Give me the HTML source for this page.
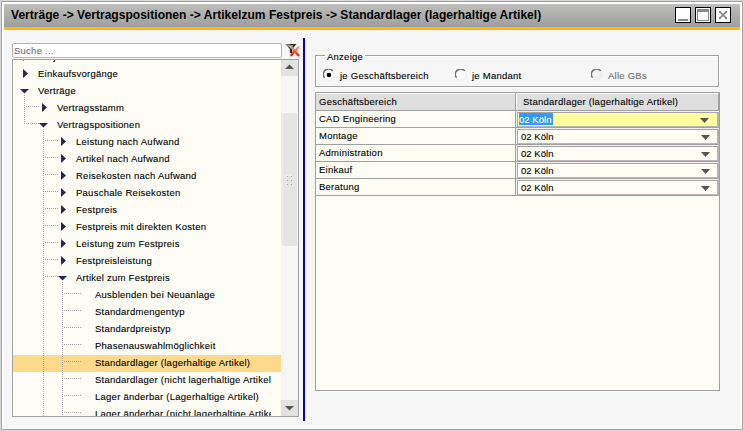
<!DOCTYPE html>
<html><head><meta charset="utf-8"><style>
*{margin:0;padding:0;box-sizing:border-box}
html,body{width:744px;height:431px;overflow:hidden;background:#d7d8d7;font-family:"Liberation Sans",sans-serif;font-size:9.5px;letter-spacing:0.25px;-webkit-text-stroke-width:0.1px;color:#000}
.abs{position:absolute}
.tt{position:absolute;white-space:nowrap;line-height:17px;height:17px;overflow:hidden}
.gt{position:absolute;white-space:nowrap;line-height:15px;height:16px}
.combo{position:absolute;width:203px;height:16px;background:#f2f2f2}
.ci{position:absolute;left:1px;top:1px;width:202px;height:15px;background:#fdfdf4;border-top:1px solid #a4a4a4;border-left:1px solid #acacac;border-bottom:1px solid #b8b8b8;border-right:2px solid #b4b4b4}
.ci.sel{background:#ffff9e}
.ct{position:absolute;left:3px;top:-2px;line-height:17px;white-space:nowrap;letter-spacing:0.05px}
.hl{position:absolute;left:1px;top:0px;height:12px;width:34px;background:#3399ff;color:#fff;line-height:14px;white-space:nowrap;overflow:hidden;text-indent:0px;letter-spacing:0.05px}
</style></head><body>
<div class="abs" style="left:1px;top:1px;width:742px;height:429px;border:1px solid #a69fa6;background:#fff"></div>
<div class="abs" style="left:4px;top:30px;width:736px;height:397px;background:#f6f6f6"></div>
<div class="abs" style="left:4px;top:4px;width:736px;height:23px;background:linear-gradient(#bebfbd,#9e9f9d)"></div>
<div class="abs" style="left:4px;top:27px;width:736px;height:3px;background:#ffb90f"></div>
<div class="abs" style="left:11px;top:4px;line-height:23px;font-size:12px;letter-spacing:0.035px;-webkit-text-stroke-width:0;font-weight:bold;white-space:nowrap">Verträge -&gt; Vertragspositionen -&gt; Artikelzum Festpreis -&gt; Standardlager (lagerhaltige Artikel)</div>
<!-- window buttons -->
<div class="abs" style="left:675px;top:7px;width:16px;height:16px;border:1px solid #000;background:#fff"><div class="abs" style="left:2px;top:11px;width:10px;height:2px;background:#888"></div></div>
<div class="abs" style="left:695px;top:7px;width:16px;height:16px;border:1px solid #000;background:#fff"><div class="abs" style="left:1px;top:1px;width:12px;height:12px;border:1px solid #888;border-top:3px solid #888"></div></div>
<div class="abs" style="left:715px;top:7px;width:16px;height:16px;border:1px solid #000;background:#fff"><svg class="abs" style="left:3px;top:3px" width="9" height="9" fill="#888"><path d="M1,1 L7,7 M7,1 L1,7" stroke="#888" stroke-width="1.7"/><rect x="2.8" y="2.8" width="2.6" height="2.6"/><rect x="0" y="0" width="2" height="2"/><rect x="6" y="0" width="2" height="2"/><rect x="0" y="6" width="2" height="2"/><rect x="6" y="6" width="2" height="2"/></svg></div>

<!-- search -->
<div class="abs" style="left:12px;top:43px;width:270px;height:15px;border:1px solid #b4b4b4;border-radius:2px;background:#fff"></div>
<div class="abs" style="left:14px;top:43px;line-height:15px;color:#707070;white-space:nowrap">Suche ...</div>
<svg class="abs" style="left:284px;top:42px" width="16" height="16">
<defs><linearGradient id="fg" x1="0" y1="0" x2="1" y2="0"><stop offset="0" stop-color="#b0b0b0"/><stop offset="0.55" stop-color="#1a1a1a"/><stop offset="1" stop-color="#333"/></linearGradient>
<linearGradient id="rg" x1="0" y1="0" x2="0" y2="1"><stop offset="0" stop-color="#ff9a80"/><stop offset="1" stop-color="#ff1500"/></linearGradient></defs>
<path d="M1,2 L12.5,2 L8.3,7 L8.3,11.8 L5.8,11 L5.8,7 Z" fill="url(#fg)"/><path d="M3.5,3.2 L9.5,3.2 L7,6 Z" fill="#e8e8e8" opacity="0.8"/>
<path d="M7.2,5.2 L14.3,13.3 M14.3,5.2 L7.2,13.3" stroke="url(#rg)" stroke-width="2.2" stroke-linecap="round"/>
</svg>
<!-- tree box -->
<div class="abs" style="left:12px;top:59px;width:287px;height:358px;border:1px solid #a0a0a0;background:#fdfdf5"></div>
<div class="abs" style="left:13px;top:60px;width:268px;height:356px;overflow:hidden">
<div style="position:absolute;left:0;top:295px;width:268px;height:17px;background:#fdd98b"></div><svg style="position:absolute;left:0;top:0" width="268" height="356" fill="#a0a0a0"><rect x="11" y="35" width="1" height="1"/><rect x="11" y="37" width="1" height="1"/><rect x="11" y="39" width="1" height="1"/><rect x="11" y="41" width="1" height="1"/><rect x="11" y="43" width="1" height="1"/><rect x="11" y="45" width="1" height="1"/><rect x="11" y="47" width="1" height="1"/><rect x="11" y="49" width="1" height="1"/><rect x="11" y="51" width="1" height="1"/><rect x="11" y="53" width="1" height="1"/><rect x="11" y="55" width="1" height="1"/><rect x="11" y="57" width="1" height="1"/><rect x="11" y="59" width="1" height="1"/><rect x="11" y="61" width="1" height="1"/><rect x="11" y="63" width="1" height="1"/><rect x="13" y="46" width="1" height="1"/><rect x="15" y="46" width="1" height="1"/><rect x="17" y="46" width="1" height="1"/><rect x="19" y="46" width="1" height="1"/><rect x="21" y="46" width="1" height="1"/><rect x="23" y="46" width="1" height="1"/><rect x="25" y="46" width="1" height="1"/><rect x="13" y="63" width="1" height="1"/><rect x="15" y="63" width="1" height="1"/><rect x="17" y="63" width="1" height="1"/><rect x="19" y="63" width="1" height="1"/><rect x="21" y="63" width="1" height="1"/><rect x="23" y="63" width="1" height="1"/><rect x="25" y="63" width="1" height="1"/><rect x="30" y="69" width="1" height="1"/><rect x="30" y="71" width="1" height="1"/><rect x="30" y="73" width="1" height="1"/><rect x="30" y="75" width="1" height="1"/><rect x="30" y="77" width="1" height="1"/><rect x="30" y="79" width="1" height="1"/><rect x="30" y="81" width="1" height="1"/><rect x="30" y="83" width="1" height="1"/><rect x="30" y="85" width="1" height="1"/><rect x="30" y="87" width="1" height="1"/><rect x="30" y="89" width="1" height="1"/><rect x="30" y="91" width="1" height="1"/><rect x="30" y="93" width="1" height="1"/><rect x="30" y="95" width="1" height="1"/><rect x="30" y="97" width="1" height="1"/><rect x="30" y="99" width="1" height="1"/><rect x="30" y="101" width="1" height="1"/><rect x="30" y="103" width="1" height="1"/><rect x="30" y="105" width="1" height="1"/><rect x="30" y="107" width="1" height="1"/><rect x="30" y="109" width="1" height="1"/><rect x="30" y="111" width="1" height="1"/><rect x="30" y="113" width="1" height="1"/><rect x="30" y="115" width="1" height="1"/><rect x="30" y="117" width="1" height="1"/><rect x="30" y="119" width="1" height="1"/><rect x="30" y="121" width="1" height="1"/><rect x="30" y="123" width="1" height="1"/><rect x="30" y="125" width="1" height="1"/><rect x="30" y="127" width="1" height="1"/><rect x="30" y="129" width="1" height="1"/><rect x="30" y="131" width="1" height="1"/><rect x="30" y="133" width="1" height="1"/><rect x="30" y="135" width="1" height="1"/><rect x="30" y="137" width="1" height="1"/><rect x="30" y="139" width="1" height="1"/><rect x="30" y="141" width="1" height="1"/><rect x="30" y="143" width="1" height="1"/><rect x="30" y="145" width="1" height="1"/><rect x="30" y="147" width="1" height="1"/><rect x="30" y="149" width="1" height="1"/><rect x="30" y="151" width="1" height="1"/><rect x="30" y="153" width="1" height="1"/><rect x="30" y="155" width="1" height="1"/><rect x="30" y="157" width="1" height="1"/><rect x="30" y="159" width="1" height="1"/><rect x="30" y="161" width="1" height="1"/><rect x="30" y="163" width="1" height="1"/><rect x="30" y="165" width="1" height="1"/><rect x="30" y="167" width="1" height="1"/><rect x="30" y="169" width="1" height="1"/><rect x="30" y="171" width="1" height="1"/><rect x="30" y="173" width="1" height="1"/><rect x="30" y="175" width="1" height="1"/><rect x="30" y="177" width="1" height="1"/><rect x="30" y="179" width="1" height="1"/><rect x="30" y="181" width="1" height="1"/><rect x="30" y="183" width="1" height="1"/><rect x="30" y="185" width="1" height="1"/><rect x="30" y="187" width="1" height="1"/><rect x="30" y="189" width="1" height="1"/><rect x="30" y="191" width="1" height="1"/><rect x="30" y="193" width="1" height="1"/><rect x="30" y="195" width="1" height="1"/><rect x="30" y="197" width="1" height="1"/><rect x="30" y="199" width="1" height="1"/><rect x="30" y="201" width="1" height="1"/><rect x="30" y="203" width="1" height="1"/><rect x="30" y="205" width="1" height="1"/><rect x="30" y="207" width="1" height="1"/><rect x="30" y="209" width="1" height="1"/><rect x="30" y="211" width="1" height="1"/><rect x="30" y="213" width="1" height="1"/><rect x="30" y="215" width="1" height="1"/><rect x="30" y="217" width="1" height="1"/><rect x="30" y="219" width="1" height="1"/><rect x="30" y="221" width="1" height="1"/><rect x="30" y="223" width="1" height="1"/><rect x="30" y="225" width="1" height="1"/><rect x="30" y="227" width="1" height="1"/><rect x="30" y="229" width="1" height="1"/><rect x="30" y="231" width="1" height="1"/><rect x="30" y="233" width="1" height="1"/><rect x="30" y="235" width="1" height="1"/><rect x="30" y="237" width="1" height="1"/><rect x="30" y="239" width="1" height="1"/><rect x="30" y="241" width="1" height="1"/><rect x="30" y="243" width="1" height="1"/><rect x="30" y="245" width="1" height="1"/><rect x="30" y="247" width="1" height="1"/><rect x="30" y="249" width="1" height="1"/><rect x="30" y="251" width="1" height="1"/><rect x="30" y="253" width="1" height="1"/><rect x="30" y="255" width="1" height="1"/><rect x="30" y="257" width="1" height="1"/><rect x="30" y="259" width="1" height="1"/><rect x="30" y="261" width="1" height="1"/><rect x="30" y="263" width="1" height="1"/><rect x="30" y="265" width="1" height="1"/><rect x="30" y="267" width="1" height="1"/><rect x="30" y="269" width="1" height="1"/><rect x="30" y="271" width="1" height="1"/><rect x="30" y="273" width="1" height="1"/><rect x="30" y="275" width="1" height="1"/><rect x="30" y="277" width="1" height="1"/><rect x="30" y="279" width="1" height="1"/><rect x="30" y="281" width="1" height="1"/><rect x="30" y="283" width="1" height="1"/><rect x="30" y="285" width="1" height="1"/><rect x="30" y="287" width="1" height="1"/><rect x="30" y="289" width="1" height="1"/><rect x="30" y="291" width="1" height="1"/><rect x="30" y="293" width="1" height="1"/><rect x="30" y="295" width="1" height="1"/><rect x="30" y="297" width="1" height="1"/><rect x="30" y="299" width="1" height="1"/><rect x="30" y="301" width="1" height="1"/><rect x="30" y="303" width="1" height="1"/><rect x="30" y="305" width="1" height="1"/><rect x="30" y="307" width="1" height="1"/><rect x="30" y="309" width="1" height="1"/><rect x="30" y="311" width="1" height="1"/><rect x="30" y="313" width="1" height="1"/><rect x="30" y="315" width="1" height="1"/><rect x="30" y="317" width="1" height="1"/><rect x="30" y="319" width="1" height="1"/><rect x="30" y="321" width="1" height="1"/><rect x="30" y="323" width="1" height="1"/><rect x="30" y="325" width="1" height="1"/><rect x="30" y="327" width="1" height="1"/><rect x="30" y="329" width="1" height="1"/><rect x="30" y="331" width="1" height="1"/><rect x="30" y="333" width="1" height="1"/><rect x="30" y="335" width="1" height="1"/><rect x="30" y="337" width="1" height="1"/><rect x="30" y="339" width="1" height="1"/><rect x="30" y="341" width="1" height="1"/><rect x="30" y="343" width="1" height="1"/><rect x="30" y="345" width="1" height="1"/><rect x="30" y="347" width="1" height="1"/><rect x="30" y="349" width="1" height="1"/><rect x="30" y="351" width="1" height="1"/><rect x="30" y="353" width="1" height="1"/><rect x="30" y="355" width="1" height="1"/><rect x="32" y="80" width="1" height="1"/><rect x="34" y="80" width="1" height="1"/><rect x="36" y="80" width="1" height="1"/><rect x="38" y="80" width="1" height="1"/><rect x="40" y="80" width="1" height="1"/><rect x="42" y="80" width="1" height="1"/><rect x="44" y="80" width="1" height="1"/><rect x="32" y="97" width="1" height="1"/><rect x="34" y="97" width="1" height="1"/><rect x="36" y="97" width="1" height="1"/><rect x="38" y="97" width="1" height="1"/><rect x="40" y="97" width="1" height="1"/><rect x="42" y="97" width="1" height="1"/><rect x="44" y="97" width="1" height="1"/><rect x="32" y="114" width="1" height="1"/><rect x="34" y="114" width="1" height="1"/><rect x="36" y="114" width="1" height="1"/><rect x="38" y="114" width="1" height="1"/><rect x="40" y="114" width="1" height="1"/><rect x="42" y="114" width="1" height="1"/><rect x="44" y="114" width="1" height="1"/><rect x="32" y="131" width="1" height="1"/><rect x="34" y="131" width="1" height="1"/><rect x="36" y="131" width="1" height="1"/><rect x="38" y="131" width="1" height="1"/><rect x="40" y="131" width="1" height="1"/><rect x="42" y="131" width="1" height="1"/><rect x="44" y="131" width="1" height="1"/><rect x="32" y="148" width="1" height="1"/><rect x="34" y="148" width="1" height="1"/><rect x="36" y="148" width="1" height="1"/><rect x="38" y="148" width="1" height="1"/><rect x="40" y="148" width="1" height="1"/><rect x="42" y="148" width="1" height="1"/><rect x="44" y="148" width="1" height="1"/><rect x="32" y="165" width="1" height="1"/><rect x="34" y="165" width="1" height="1"/><rect x="36" y="165" width="1" height="1"/><rect x="38" y="165" width="1" height="1"/><rect x="40" y="165" width="1" height="1"/><rect x="42" y="165" width="1" height="1"/><rect x="44" y="165" width="1" height="1"/><rect x="32" y="182" width="1" height="1"/><rect x="34" y="182" width="1" height="1"/><rect x="36" y="182" width="1" height="1"/><rect x="38" y="182" width="1" height="1"/><rect x="40" y="182" width="1" height="1"/><rect x="42" y="182" width="1" height="1"/><rect x="44" y="182" width="1" height="1"/><rect x="32" y="199" width="1" height="1"/><rect x="34" y="199" width="1" height="1"/><rect x="36" y="199" width="1" height="1"/><rect x="38" y="199" width="1" height="1"/><rect x="40" y="199" width="1" height="1"/><rect x="42" y="199" width="1" height="1"/><rect x="44" y="199" width="1" height="1"/><rect x="32" y="216" width="1" height="1"/><rect x="34" y="216" width="1" height="1"/><rect x="36" y="216" width="1" height="1"/><rect x="38" y="216" width="1" height="1"/><rect x="40" y="216" width="1" height="1"/><rect x="42" y="216" width="1" height="1"/><rect x="44" y="216" width="1" height="1"/><rect x="49" y="222" width="1" height="1"/><rect x="49" y="224" width="1" height="1"/><rect x="49" y="226" width="1" height="1"/><rect x="49" y="228" width="1" height="1"/><rect x="49" y="230" width="1" height="1"/><rect x="49" y="232" width="1" height="1"/><rect x="49" y="234" width="1" height="1"/><rect x="49" y="236" width="1" height="1"/><rect x="49" y="238" width="1" height="1"/><rect x="49" y="240" width="1" height="1"/><rect x="49" y="242" width="1" height="1"/><rect x="49" y="244" width="1" height="1"/><rect x="49" y="246" width="1" height="1"/><rect x="49" y="248" width="1" height="1"/><rect x="49" y="250" width="1" height="1"/><rect x="49" y="252" width="1" height="1"/><rect x="49" y="254" width="1" height="1"/><rect x="49" y="256" width="1" height="1"/><rect x="49" y="258" width="1" height="1"/><rect x="49" y="260" width="1" height="1"/><rect x="49" y="262" width="1" height="1"/><rect x="49" y="264" width="1" height="1"/><rect x="49" y="266" width="1" height="1"/><rect x="49" y="268" width="1" height="1"/><rect x="49" y="270" width="1" height="1"/><rect x="49" y="272" width="1" height="1"/><rect x="49" y="274" width="1" height="1"/><rect x="49" y="276" width="1" height="1"/><rect x="49" y="278" width="1" height="1"/><rect x="49" y="280" width="1" height="1"/><rect x="49" y="282" width="1" height="1"/><rect x="49" y="284" width="1" height="1"/><rect x="49" y="286" width="1" height="1"/><rect x="49" y="288" width="1" height="1"/><rect x="49" y="290" width="1" height="1"/><rect x="49" y="292" width="1" height="1"/><rect x="49" y="294" width="1" height="1"/><rect x="49" y="296" width="1" height="1"/><rect x="49" y="298" width="1" height="1"/><rect x="49" y="300" width="1" height="1"/><rect x="49" y="302" width="1" height="1"/><rect x="49" y="304" width="1" height="1"/><rect x="49" y="306" width="1" height="1"/><rect x="49" y="308" width="1" height="1"/><rect x="49" y="310" width="1" height="1"/><rect x="49" y="312" width="1" height="1"/><rect x="49" y="314" width="1" height="1"/><rect x="49" y="316" width="1" height="1"/><rect x="49" y="318" width="1" height="1"/><rect x="49" y="320" width="1" height="1"/><rect x="49" y="322" width="1" height="1"/><rect x="49" y="324" width="1" height="1"/><rect x="49" y="326" width="1" height="1"/><rect x="49" y="328" width="1" height="1"/><rect x="49" y="330" width="1" height="1"/><rect x="49" y="332" width="1" height="1"/><rect x="49" y="334" width="1" height="1"/><rect x="49" y="336" width="1" height="1"/><rect x="49" y="338" width="1" height="1"/><rect x="49" y="340" width="1" height="1"/><rect x="49" y="342" width="1" height="1"/><rect x="49" y="344" width="1" height="1"/><rect x="49" y="346" width="1" height="1"/><rect x="49" y="348" width="1" height="1"/><rect x="49" y="350" width="1" height="1"/><rect x="49" y="352" width="1" height="1"/><rect x="49" y="354" width="1" height="1"/><rect x="49" y="356" width="1" height="1"/><rect x="51" y="233" width="1" height="1"/><rect x="53" y="233" width="1" height="1"/><rect x="55" y="233" width="1" height="1"/><rect x="57" y="233" width="1" height="1"/><rect x="59" y="233" width="1" height="1"/><rect x="61" y="233" width="1" height="1"/><rect x="63" y="233" width="1" height="1"/><rect x="65" y="233" width="1" height="1"/><rect x="67" y="233" width="1" height="1"/><rect x="51" y="250" width="1" height="1"/><rect x="53" y="250" width="1" height="1"/><rect x="55" y="250" width="1" height="1"/><rect x="57" y="250" width="1" height="1"/><rect x="59" y="250" width="1" height="1"/><rect x="61" y="250" width="1" height="1"/><rect x="63" y="250" width="1" height="1"/><rect x="65" y="250" width="1" height="1"/><rect x="67" y="250" width="1" height="1"/><rect x="51" y="267" width="1" height="1"/><rect x="53" y="267" width="1" height="1"/><rect x="55" y="267" width="1" height="1"/><rect x="57" y="267" width="1" height="1"/><rect x="59" y="267" width="1" height="1"/><rect x="61" y="267" width="1" height="1"/><rect x="63" y="267" width="1" height="1"/><rect x="65" y="267" width="1" height="1"/><rect x="67" y="267" width="1" height="1"/><rect x="51" y="284" width="1" height="1"/><rect x="53" y="284" width="1" height="1"/><rect x="55" y="284" width="1" height="1"/><rect x="57" y="284" width="1" height="1"/><rect x="59" y="284" width="1" height="1"/><rect x="61" y="284" width="1" height="1"/><rect x="63" y="284" width="1" height="1"/><rect x="65" y="284" width="1" height="1"/><rect x="67" y="284" width="1" height="1"/><rect x="51" y="301" width="1" height="1"/><rect x="53" y="301" width="1" height="1"/><rect x="55" y="301" width="1" height="1"/><rect x="57" y="301" width="1" height="1"/><rect x="59" y="301" width="1" height="1"/><rect x="61" y="301" width="1" height="1"/><rect x="63" y="301" width="1" height="1"/><rect x="65" y="301" width="1" height="1"/><rect x="67" y="301" width="1" height="1"/><rect x="51" y="318" width="1" height="1"/><rect x="53" y="318" width="1" height="1"/><rect x="55" y="318" width="1" height="1"/><rect x="57" y="318" width="1" height="1"/><rect x="59" y="318" width="1" height="1"/><rect x="61" y="318" width="1" height="1"/><rect x="63" y="318" width="1" height="1"/><rect x="65" y="318" width="1" height="1"/><rect x="67" y="318" width="1" height="1"/><rect x="51" y="335" width="1" height="1"/><rect x="53" y="335" width="1" height="1"/><rect x="55" y="335" width="1" height="1"/><rect x="57" y="335" width="1" height="1"/><rect x="59" y="335" width="1" height="1"/><rect x="61" y="335" width="1" height="1"/><rect x="63" y="335" width="1" height="1"/><rect x="65" y="335" width="1" height="1"/><rect x="67" y="335" width="1" height="1"/><rect x="51" y="352" width="1" height="1"/><rect x="53" y="352" width="1" height="1"/><rect x="55" y="352" width="1" height="1"/><rect x="57" y="352" width="1" height="1"/><rect x="59" y="352" width="1" height="1"/><rect x="61" y="352" width="1" height="1"/><rect x="63" y="352" width="1" height="1"/><rect x="65" y="352" width="1" height="1"/><rect x="67" y="352" width="1" height="1"/></svg><svg style="position:absolute;left:0;top:0" width="268" height="356" fill="#27284a"><polygon points="10,-8 15,-3.5 10,1"/><polygon points="10,9 15,13.5 10,18"/><polygon points="7,29 16,29 11.5,33.5"/><polygon points="29,43 34,47.5 29,52"/><polygon points="26,63 35,63 30.5,67.5"/><polygon points="48,77 53,81.5 48,86"/><polygon points="48,94 53,98.5 48,103"/><polygon points="48,111 53,115.5 48,120"/><polygon points="48,128 53,132.5 48,137"/><polygon points="48,145 53,149.5 48,154"/><polygon points="48,162 53,166.5 48,171"/><polygon points="48,179 53,183.5 48,188"/><polygon points="48,196 53,200.5 48,205"/><polygon points="45,216 54,216 49.5,220.5"/></svg><div class="tt" style="left:25px;top:-12px;width:233px">Projekte</div>
<div class="tt" style="left:25px;top:5px;width:233px">Einkaufsvorgänge</div>
<div class="tt" style="left:25px;top:22px;width:233px">Verträge</div>
<div class="tt" style="left:44px;top:39px;width:214px">Vertragsstamm</div>
<div class="tt" style="left:44px;top:56px;width:214px">Vertragspositionen</div>
<div class="tt" style="left:63px;top:73px;width:195px">Leistung nach Aufwand</div>
<div class="tt" style="left:63px;top:90px;width:195px">Artikel nach Aufwand</div>
<div class="tt" style="left:63px;top:107px;width:195px">Reisekosten nach Aufwand</div>
<div class="tt" style="left:63px;top:124px;width:195px">Pauschale Reisekosten</div>
<div class="tt" style="left:63px;top:141px;width:195px">Festpreis</div>
<div class="tt" style="left:63px;top:158px;width:195px">Festpreis mit direkten Kosten</div>
<div class="tt" style="left:63px;top:175px;width:195px">Leistung zum Festpreis</div>
<div class="tt" style="left:63px;top:192px;width:195px">Festpreisleistung</div>
<div class="tt" style="left:63px;top:209px;width:195px">Artikel zum Festpreis</div>
<div class="tt" style="left:82px;top:226px;width:176px">Ausblenden bei Neuanlage</div>
<div class="tt" style="left:82px;top:243px;width:176px">Standardmengentyp</div>
<div class="tt" style="left:82px;top:260px;width:176px">Standardpreistyp</div>
<div class="tt" style="left:82px;top:277px;width:176px">Phasenauswahlmöglichkeit</div>
<div class="tt" style="left:82px;top:294px;width:176px">Standardlager (lagerhaltige Artikel)</div>
<div class="tt" style="left:82px;top:311px;width:176px">Standardlager (nicht lagerhaltige Artikel)</div>
<div class="tt" style="left:82px;top:328px;width:176px">Lager änderbar (Lagerhaltige Artikel)</div>
<div class="tt" style="left:82px;top:345px;width:176px">Lager änderbar (nicht lagerhaltige Artikel)</div>
</div>
<!-- scrollbar -->
<div class="abs" style="left:281px;top:60px;width:17px;height:356px;background:#f6f6f6"></div>
<div class="abs" style="left:281px;top:60px;width:17px;height:16px;background:#e2e2e2"></div>
<svg class="abs" style="left:285px;top:64px" width="9" height="6"><polygon points="0,5 9,5 4.5,0.5" fill="#555"/></svg>
<div class="abs" style="left:281px;top:400px;width:17px;height:16px;background:#e2e2e2"></div>
<svg class="abs" style="left:285px;top:406px" width="9" height="6"><polygon points="0,0 9,0 4.5,4.5" fill="#555"/><polygon points="0,0.8 4.5,5.3 9,0.8 9,1 4.5,5.6 0,1" fill="#fff" opacity="0.0"/></svg>
<div class="abs" style="left:281px;top:113px;width:16px;height:132px;background:#ececec"></div><div class="abs" style="left:283px;top:113px;width:14px;height:133px;background:#e5e5e5"></div>
<svg class="abs" style="left:286px;top:175px" width="6" height="10" fill="#fff">
<rect x="0" y="0" width="1" height="1"/><rect x="4" y="0" width="1" height="1"/><rect x="0" y="4" width="1" height="1"/><rect x="4" y="4" width="1" height="1"/><rect x="0" y="8" width="1" height="1"/><rect x="4" y="8" width="1" height="1"/>
</svg>
<svg class="abs" style="left:286px;top:175px" width="6" height="10" fill="#a8a8a8">
<rect x="1" y="1" width="1" height="1"/><rect x="5" y="1" width="1" height="1"/><rect x="1" y="5" width="1" height="1"/><rect x="5" y="5" width="1" height="1"/><rect x="1" y="9" width="1" height="1"/><rect x="5" y="9" width="1" height="1"/>
</svg>

<!-- blue separator -->
<div class="abs" style="left:303px;top:38px;width:2px;height:383px;background:#0000cc"></div>

<!-- group box -->
<div class="abs" style="left:315px;top:55px;width:404px;height:32px;border:1px solid #a0a0a0;box-shadow:inset 1px 1px 0 #fff,1px 1px 0 #fff"></div>
<div class="abs" style="left:325px;top:50px;padding:0 2px;background:#f6f6f6;line-height:14px;white-space:nowrap">Anzeige</div>
<!-- radios -->
<svg class="abs" style="left:323px;top:69px" width="12" height="12"><circle cx="6" cy="6" r="5.2" fill="#fff" stroke="#ececec" stroke-width="1"/><path d="M1.5,8.7 A5.2,5.2 0 0 1 9.8,1.9" fill="none" stroke="#6e6e6e" stroke-width="1.4"/><circle cx="6" cy="6" r="2.3" fill="#000"/></svg>
<div class="abs" style="left:340px;top:68px;line-height:15px;white-space:nowrap">je Geschäftsbereich</div>
<svg class="abs" style="left:455px;top:69px" width="12" height="12"><circle cx="6" cy="6" r="5.2" fill="#fff" stroke="#ececec" stroke-width="1"/><path d="M1.5,8.7 A5.2,5.2 0 0 1 9.8,1.9" fill="none" stroke="#6e6e6e" stroke-width="1.4"/></svg>
<div class="abs" style="left:472px;top:68px;line-height:15px;white-space:nowrap">je Mandant</div>
<svg class="abs" style="left:591px;top:69px" width="12" height="12"><circle cx="6" cy="6" r="5.2" fill="#f0f0f0" stroke="#ececec" stroke-width="1"/><path d="M1.5,8.7 A5.2,5.2 0 0 1 9.8,1.9" fill="none" stroke="#6e6e6e" stroke-width="1.4"/></svg>
<div class="abs" style="left:608px;top:68px;line-height:15px;white-space:nowrap;color:#6d6d6d">Alle GBs</div>

<!-- grid -->
<div class="abs" style="left:315px;top:92px;width:405px;height:299px;border:1px solid #a0a0a0;background:#fdfdf4"></div>
<div class="abs" style="left:316px;top:93px;width:403px;height:17px;background:#dedede;border-top:1px solid #fff;border-right:1px solid #a0a0a0"></div>
<div class="abs" style="left:316px;top:110px;width:403px;height:1px;background:#a0a0a0"></div>
<div class="abs" style="left:515px;top:93px;width:1px;height:102px;background:#a0a0a0"></div>
<div class="abs" style="left:516px;top:93px;width:1px;height:17px;background:#fff"></div>
<div class="gt" style="left:319px;top:94px">Geschäftsbereich</div>
<div class="gt" style="left:523px;top:94px">Standardlager (lagerhaltige Artikel)</div>
<div class="gt" style="left:319px;top:111px">CAD Engineering</div><div style="position:absolute;left:316px;top:127px;width:403px;height:1px;background:#a0a0a0"></div><div class="combo" style="left:516px;top:111px"><div class="ci sel"><span class="hl">02 Köln</span><svg style="position:absolute;left:182px;top:5px" width="9" height="5"><polygon points="0,0 9,0 4.5,5" fill="#555"/></svg></div></div><div class="gt" style="left:319px;top:128px">Montage</div><div style="position:absolute;left:316px;top:144px;width:403px;height:1px;background:#a0a0a0"></div><div class="combo" style="left:516px;top:128px"><div class="ci"><span class="ct">02 Köln</span><svg style="position:absolute;left:183px;top:5px" width="9" height="5"><polygon points="0,0 9,0 4.5,5" fill="#555"/></svg></div></div><div class="gt" style="left:319px;top:145px">Administration</div><div style="position:absolute;left:316px;top:161px;width:403px;height:1px;background:#a0a0a0"></div><div class="combo" style="left:516px;top:145px"><div class="ci"><span class="ct">02 Köln</span><svg style="position:absolute;left:183px;top:5px" width="9" height="5"><polygon points="0,0 9,0 4.5,5" fill="#555"/></svg></div></div><div class="gt" style="left:319px;top:162px">Einkauf</div><div style="position:absolute;left:316px;top:178px;width:403px;height:1px;background:#a0a0a0"></div><div class="combo" style="left:516px;top:162px"><div class="ci"><span class="ct">02 Köln</span><svg style="position:absolute;left:183px;top:5px" width="9" height="5"><polygon points="0,0 9,0 4.5,5" fill="#555"/></svg></div></div><div class="gt" style="left:319px;top:179px">Beratung</div><div style="position:absolute;left:316px;top:195px;width:403px;height:1px;background:#a0a0a0"></div><div class="combo" style="left:516px;top:179px"><div class="ci"><span class="ct">02 Köln</span><svg style="position:absolute;left:183px;top:5px" width="9" height="5"><polygon points="0,0 9,0 4.5,5" fill="#555"/></svg></div></div>
</body></html>
